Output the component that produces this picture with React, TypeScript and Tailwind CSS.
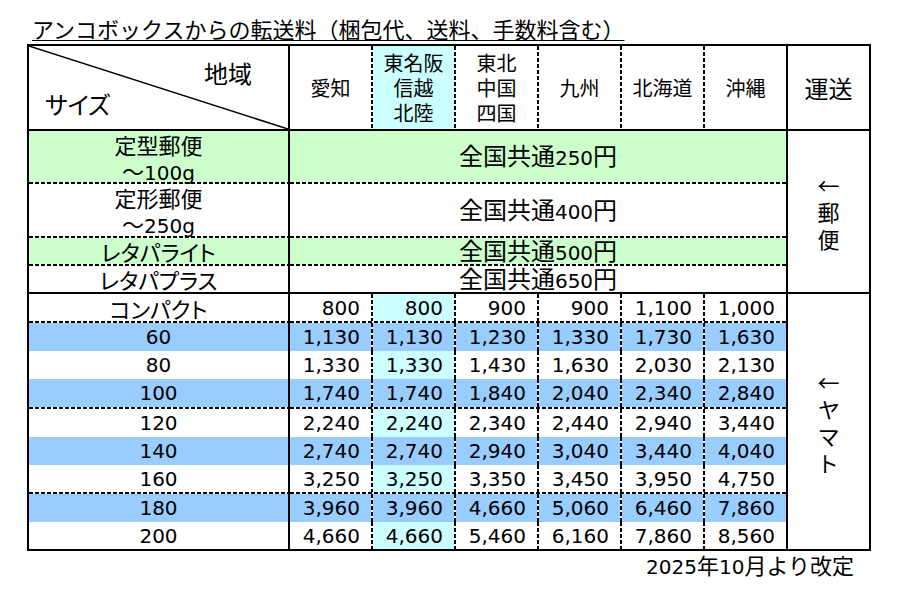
import React from "react";

const HD = () => (
  <div className="h-[2px] w-full shrink-0 [background-image:repeating-linear-gradient(to_right,#000_0px,#000_4px,transparent_4px,transparent_6px)]" />
);
const VD = () => (
  <div className="w-[2px] self-stretch shrink-0 [background-image:repeating-linear-gradient(to_bottom,#000_0px,#000_4px,transparent_4px,transparent_6px)]" />
);
const D = ({ children }: { children: React.ReactNode }) => (
  <span className="font-['DejaVu_Sans',sans-serif] text-[20px]">{children}</span>
);

type YRow = { label: string; vals: string[]; blue: boolean; h: string; dash?: boolean };

const yamato: YRow[] = [
  { label: "コンパクト", vals: ["800", "800", "900", "900", "1,100", "1,000"], blue: false, h: "h-[27px]", dash: true },
  { label: "60", vals: ["1,130", "1,130", "1,230", "1,330", "1,730", "1,630"], blue: true, h: "h-[28px]" },
  { label: "80", vals: ["1,330", "1,330", "1,430", "1,630", "2,030", "2,130"], blue: false, h: "h-[28px]" },
  { label: "100", vals: ["1,740", "1,740", "1,840", "2,040", "2,340", "2,840"], blue: true, h: "h-[28px]", dash: true },
  { label: "120", vals: ["2,240", "2,240", "2,340", "2,440", "2,940", "3,440"], blue: false, h: "h-[28px]" },
  { label: "140", vals: ["2,740", "2,740", "2,940", "3,040", "3,440", "4,040"], blue: true, h: "h-[28px]" },
  { label: "160", vals: ["3,250", "3,250", "3,350", "3,450", "3,950", "4,750"], blue: false, h: "h-[27px]", dash: true },
  { label: "180", vals: ["3,960", "3,960", "4,660", "5,060", "6,460", "7,860"], blue: true, h: "h-[28px]" },
  { label: "200", vals: ["4,660", "4,660", "5,460", "6,160", "7,860", "8,560"], blue: false, h: "h-[27px]" },
];

const regions: string[][] = [["愛知"], ["東名阪", "信越", "北陸"], ["東北", "中国", "四国"], ["九州"], ["北海道"], ["沖縄"]];

type MRow = { label: React.ReactNode; price: string; green: boolean; h: string; dash: boolean };
const mail: MRow[] = [
  {
    label: (
      <div className="flex flex-col items-center leading-[26px] pt-[3px]">
        <span>定型郵便</span>
        <span>～<D>100g</D></span>
      </div>
    ),
    price: "250",
    green: true,
    h: "h-[51px]",
    dash: true,
  },
  {
    label: (
      <div className="flex flex-col items-center leading-[26px] pt-[3px]">
        <span>定形郵便</span>
        <span>～<D>250g</D></span>
      </div>
    ),
    price: "400",
    green: false,
    h: "h-[52px]",
    dash: true,
  },
  { label: <span>レタパライト</span>, price: "500", green: true, h: "h-[26px]", dash: true },
  { label: <span>レタパプラス</span>, price: "650", green: false, h: "h-[26px]", dash: false },
];

function Vertical({ chars }: { chars: string[] }) {
  return (
    <div className="w-[83px] border-l-2 border-black flex flex-col items-center justify-center text-[22px] leading-[27px]">
      {chars.map((c, i) => (
        <span key={i}>{c}</span>
      ))}
    </div>
  );
}

export default function App() {
  return (
    <div className="w-[900px] h-[600px] bg-white pl-[27px] text-black font-['Noto_Sans_CJK_JP',sans-serif] [font-feature-settings:'palt']">
      <div className="h-[44px] pt-[14px] pl-[5px] text-[22px] leading-[28px] [font-feature-settings:normal]">
        <span className="underline underline-offset-[2px] decoration-1">アンコボックスからの転送料（梱包代、送料、手数料含む）</span>
      </div>
      <div className="w-[844px] border-2 border-black flex flex-col">
        {/* header */}
        <div className="flex h-[85px] border-b-2 border-black">
          <div className="relative w-[261px] border-r-2 border-black flex flex-col">
            <svg className="absolute inset-0 w-full h-full" viewBox="0 0 259 83" preserveAspectRatio="none">
              <line x1="0" y1="0" x2="259" y2="83" stroke="#000" strokeWidth="1.5" />
            </svg>
            <span className="relative self-end mr-[36px] mt-[15px] text-[24px] leading-[24px]">地域</span>
            <span className="relative self-start ml-[16px] mt-[7px] text-[24px] leading-[24px]">サイズ</span>
          </div>
          <div className="w-[496px] flex">
            {regions.map((r, i) => (
              <React.Fragment key={i}>
                {i > 0 && <VD />}
                <div
                  className={`w-[81px] flex flex-col items-center justify-center text-[20px] leading-[25px] ${
                    i === 1 ? "bg-[#ccffff]" : "bg-white"
                  }`}
                >
                  {r.map((l, j) => (
                    <span key={j}>{l}</span>
                  ))}
                </div>
              </React.Fragment>
            ))}
          </div>
          <div className="w-[83px] border-l-2 border-black flex items-center justify-center text-[24px]">運送</div>
        </div>

        {/* mail section */}
        <div className="flex border-b-2 border-black">
          <div className="w-[261px] border-r-2 border-black flex flex-col">
            {mail.map((m, i) => (
              <React.Fragment key={i}>
                <div className={`${m.h} ${m.green ? "bg-[#ccffcc]" : "bg-white"} flex items-center justify-center text-[22px] leading-[26px]`}>
                  {m.label}
                </div>
                {m.dash && <HD />}
              </React.Fragment>
            ))}
          </div>
          <div className="w-[496px] flex flex-col">
            {mail.map((m, i) => (
              <React.Fragment key={i}>
                <div className={`${m.h} ${m.green ? "bg-[#ccffcc]" : "bg-white"} flex items-center justify-center text-[24px] leading-[26px]`}>
                  <span>
                    全国共通<D>{m.price}</D>円
                  </span>
                </div>
                {m.dash && <HD />}
              </React.Fragment>
            ))}
          </div>
          <Vertical chars={["←", "郵", "便"]} />
        </div>

        {/* yamato section */}
        <div className="flex">
          <div className="w-[261px] border-r-2 border-black flex flex-col">
            {yamato.map((r, i) => (
              <React.Fragment key={i}>
                <div className={`${r.h} ${r.blue ? "bg-[#99ccff]" : "bg-white"} flex items-center justify-center text-[22px] leading-[26px]`}>
                  {i === 0 ? <span>{r.label}</span> : <D>{r.label}</D>}
                </div>
                {r.dash && <HD />}
              </React.Fragment>
            ))}
          </div>
          <div className="w-[496px] flex flex-col">
            {yamato.map((r, i) => (
              <React.Fragment key={i}>
                <div className={`${r.h} flex`}>
                  {r.vals.map((v, j) => (
                    <React.Fragment key={j}>
                      {j > 0 && <VD />}
                      <div
                        className={`w-[81px] flex items-center justify-end pr-[11px] leading-[26px] ${
                          r.blue ? "bg-[#99ccff]" : j === 1 ? "bg-[#ccffff]" : "bg-white"
                        }`}
                      >
                        <D>{v}</D>
                      </div>
                    </React.Fragment>
                  ))}
                </div>
                {r.dash && <HD />}
              </React.Fragment>
            ))}
          </div>
          <Vertical chars={["←", "ヤ", "マ", "ト"]} />
        </div>
      </div>
      <div className="w-[844px] flex justify-end pr-[17px] text-[22px] leading-[26px] [font-feature-settings:normal]">
        <span>
          <D>2025</D>年<D>10</D>月より改定
        </span>
      </div>
    </div>
  );
}
